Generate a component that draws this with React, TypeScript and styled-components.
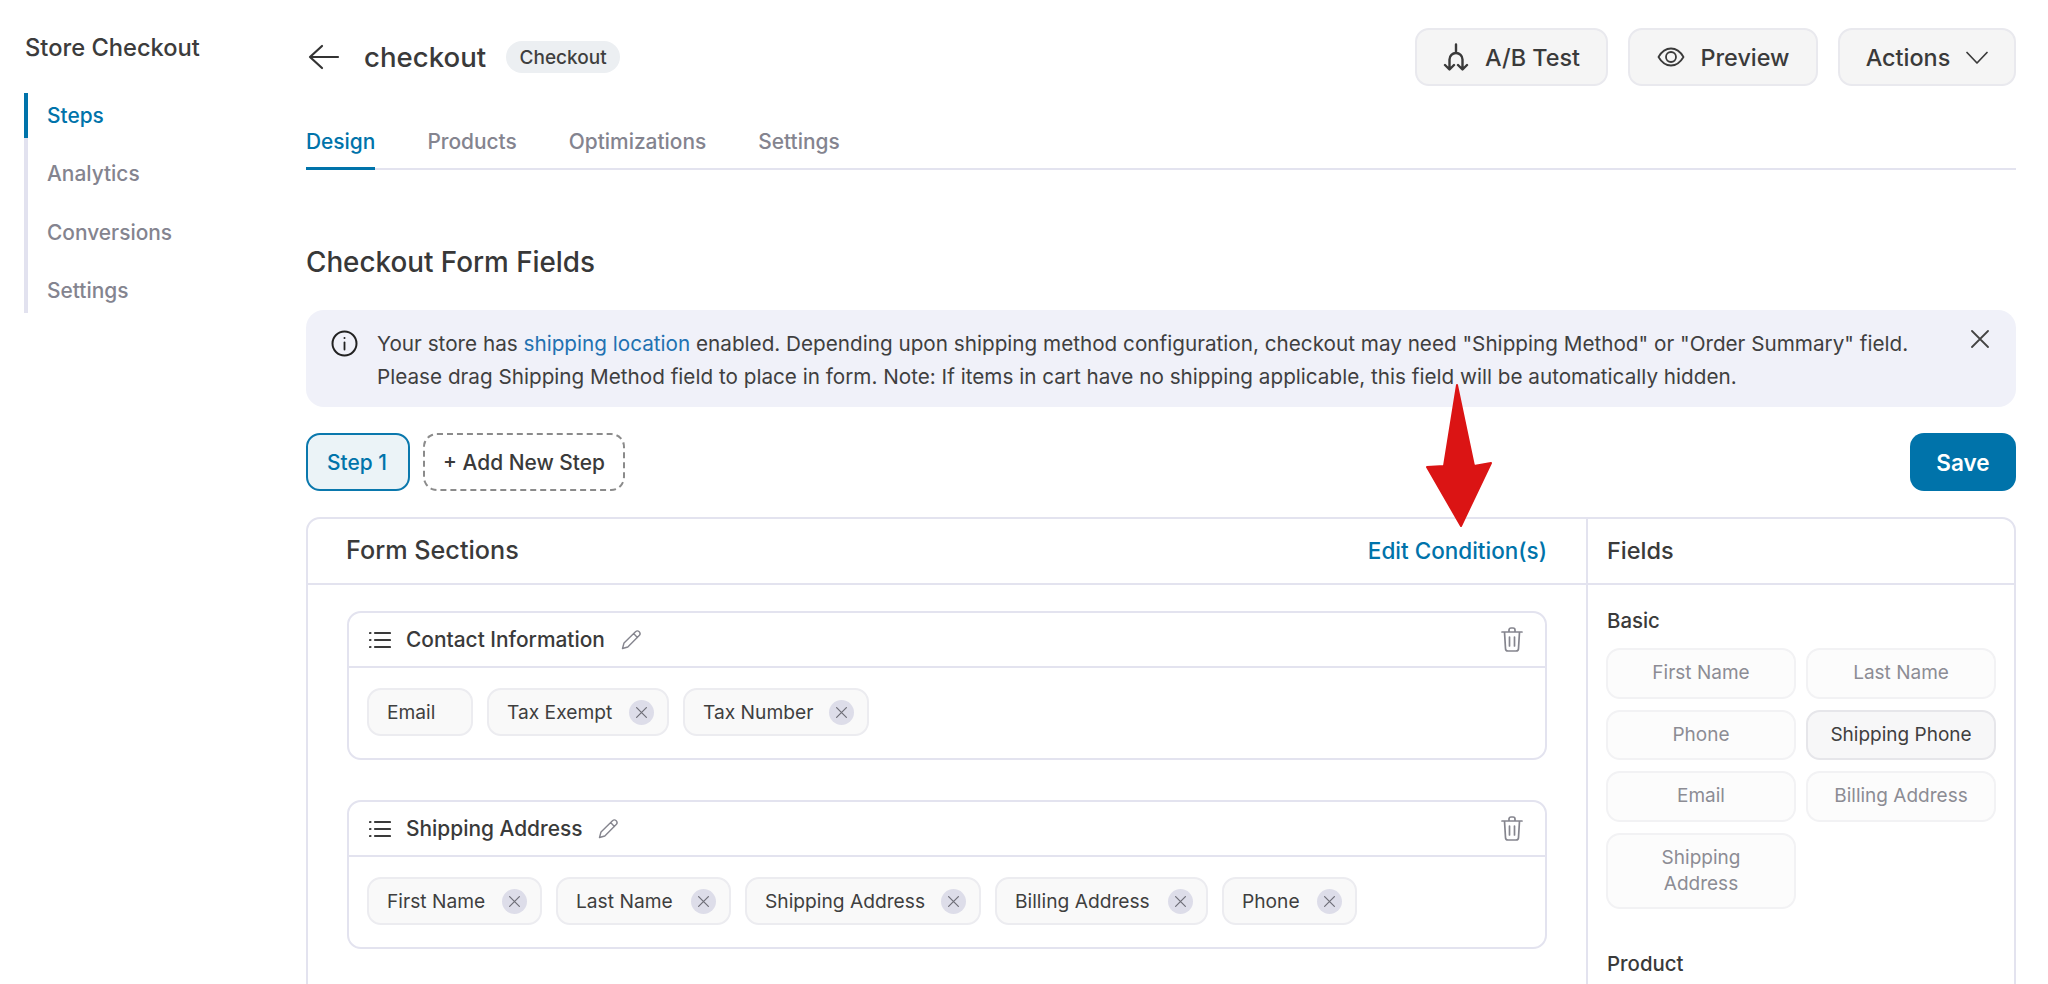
import React from "react";
import styled, { createGlobalStyle } from "styled-components";

const Global = createGlobalStyle`
  html, body { margin: 0; padding: 0; height: 984px; overflow: hidden; background: #fff; }
  body { font-family: Inter, "Liberation Sans", sans-serif; color: #3a3a3a; }
  * { box-sizing: border-box; }
`;

const Page = styled.div`
  position: relative;
  display: flex;
  width: 2048px;
  height: 984px;
  overflow: hidden;
`;

const Sidebar = styled.aside`
  width: 306px;
  flex: none;
  padding: 33px 0 0 25px;
`;

const SideTitle = styled.div`
  font-size: 23.7px;
  font-weight: 500;
  line-height: 30px;
  color: #3c3c3c;
  margin-bottom: 30px;
`;

const SideNav = styled.nav`
  display: flex;
  flex-direction: column;
  gap: 13.3px;
  width: 230px;
  margin-left: -1px;
  border-left: 4px solid #e2e2ef;
`;

const SideItem = styled.div<{ $active?: boolean }>`
  height: 45px;
  margin-left: -4px;
  padding-left: 19px;
  display: flex;
  align-items: center;
  font-size: 20.9px;
  font-weight: 500;
  border-left: 4px solid ${(p) => (p.$active ? "#0073aa" : "transparent")};
  color: ${(p) => (p.$active ? "#0073aa" : "#84848f")};
`;

const Main = styled.main`
  flex: 1;
  padding: 28px 32px 0 0;
  min-width: 0;
`;

const TopBar = styled.div`
  display: flex;
  align-items: center;
  height: 58px;
`;

const BackButton = styled.span`
  display: flex;
  margin: 0 24px 0 2px;
  color: #333;
`;

const PageName = styled.h1`
  margin: 0;
  font-size: 27.6px;
  font-weight: 500;
  color: #3a3a3a;
`;

const Badge = styled.span`
  margin-left: 20px;
  height: 32px;
  width: 114px;
  border-radius: 16px;
  background: #eceff2;
  display: flex;
  align-items: center;
  justify-content: center;
  font-size: 19px;
  font-weight: 500;
  color: #3f3f3f;
`;

const TopActions = styled.div`
  margin-left: auto;
  display: flex;
  gap: 20px;
`;

const TopButton = styled.div<{ $w: number }>`
  width: ${(p) => p.$w}px;
  height: 58px;
  display: flex;
  align-items: center;
  justify-content: center;
  gap: 16px;
  background: #f5f5f5;
  border: 2px solid #e9e9ee;
  border-radius: 14px;
  font-size: 23.4px;
  font-weight: 500;
  color: #3a3a3a;
`;

const Tabs = styled.div`
  display: flex;
  gap: 52px;
  margin-top: 39px;
  height: 45px;
  border-bottom: 2px solid #e3e3ef;
`;

const Tab = styled.div<{ $active?: boolean }>`
  height: 45px;
  padding-top: 2px;
  line-height: 30px;
  font-size: 20.9px;
  font-weight: 500;
  color: ${(p) => (p.$active ? "#0073aa" : "#84848f")};
  border-bottom: 3px solid ${(p) => (p.$active ? "#0073aa" : "transparent")};
`;

const Heading = styled.h2`
  margin: 74px 0 0;
  font-size: 27.8px;
  line-height: 36px;
  font-weight: 500;
  color: #383838;
`;

const Alert = styled.div`
  position: relative;
  margin-top: 30px;
  height: 97px;
  padding: 17px 0 0 25px;
  display: flex;
  gap: 19px;
  background: #f0f1f9;
  border-radius: 18px;
  font-size: 20.7px;
  line-height: 33px;
  color: #3f3f3f;
`;

const AlertIcon = styled.span`
  flex: none;
  display: flex;
  height: 33px;
  align-items: center;
  color: #222;
`;

const AlertLink = styled.span`
  color: #2271b1;
`;

const AlertClose = styled.span`
  position: absolute;
  top: 20px;
  right: 27px;
  display: flex;
  color: #444;
`;

const StepRow = styled.div`
  display: flex;
  gap: 13px;
  margin-top: 26px;
`;

const StepButton = styled.div`
  width: 104px;
  height: 58px;
  padding-right: 2px;
  display: flex;
  align-items: center;
  justify-content: center;
  background: #ebf3f7;
  border: 2px solid #0a78ad;
  border-radius: 14px;
  color: #0073aa;
  font-size: 20.9px;
  font-weight: 500;
`;

const AddStep = styled.div`
  width: 202px;
  height: 58px;
  display: flex;
  align-items: center;
  justify-content: center;
  border: 2px dashed #8b8b8b;
  border-radius: 14px;
  color: #3a3a3a;
  font-size: 20.9px;
  font-weight: 500;
`;

const SaveButton = styled.div`
  margin-left: auto;
  width: 106px;
  height: 58px;
  display: flex;
  align-items: center;
  justify-content: center;
  background: #0073aa;
  border-radius: 14px;
  color: #fff;
  font-size: 22.5px;
  font-weight: 600;
`;

const Board = styled.div`
  margin-top: 26px;
  display: grid;
  grid-template-columns: 1280px 1fr;
  height: 600px;
  border: 2px solid #e3e3ef;
  border-radius: 14px;
`;

const BoardLeft = styled.div`
  border-right: 2px solid #e3e3ef;
`;

const BoardHead = styled.div<{ $pad: number }>`
  height: 66px;
  padding: 0 39px 2px ${(p) => p.$pad}px;
  display: flex;
  align-items: center;
  justify-content: space-between;
  border-bottom: 2px solid #e3e3ef;
`;

const BoardTitle = styled.div<{ $small?: boolean }>`
  font-size: ${(p) => (p.$small ? 23.5 : 25.2)}px;
  font-weight: 500;
  color: #3a3a3a;
`;

const EditLink = styled.div`
  font-size: 22.5px;
  font-weight: 500;
  color: #0073aa;
`;

const SectionList = styled.div`
  padding: 26px 39px 0 39px;
  display: flex;
  flex-direction: column;
  gap: 40px;
`;

const SectionCard = styled.div`
  height: 149px;
  border: 2px solid #e3e3ef;
  border-radius: 14px;
`;

const SectionHead = styled.div`
  height: 55px;
  padding: 0 22px 0 20px;
  display: flex;
  align-items: center;
  border-bottom: 2px solid #e3e3ef;
`;

const SectionName = styled.div`
  margin-left: 15px;
  font-size: 20.9px;
  font-weight: 500;
  color: #3a3a3a;
`;

const PencilBox = styled.span`
  display: flex;
  margin-left: 16px;
  color: #85858e;
`;

const TrashBox = styled.span`
  display: flex;
  margin-left: auto;
  color: #85858e;
`;

const ChipRow = styled.div`
  padding: 20px 18px 0;
  display: flex;
  gap: 14px;
`;

const Chip = styled.div<{ $w: number }>`
  width: ${(p) => p.$w}px;
  height: 48px;
  padding: 0 13px 0 18px;
  display: flex;
  align-items: center;
  justify-content: space-between;
  background: #f9f9f9;
  border: 2px solid #ececf0;
  border-radius: 14px;
  font-size: 19.2px;
  color: #3f3f3f;
`;

const ChipRemove = styled.span`
  width: 25px;
  height: 25px;
  border-radius: 50%;
  background: #dddde9;
  display: flex;
  align-items: center;
  justify-content: center;
  color: #6f6f78;
`;

const FieldsPane = styled.div`
  padding: 23px 18px 0 19px;
`;

const GroupTitle = styled.div`
  font-size: 20.4px;
  font-weight: 500;
  line-height: 26px;
  color: #3a3a3a;
`;

const FieldGrid = styled.div`
  display: grid;
  grid-template-columns: 190px 190px;
  gap: 11px 10px;
  margin: 14px 0 0 -1px;
`;

const FieldBtn = styled.div<{ $on?: boolean; $tall?: boolean }>`
  height: ${(p) => (p.$tall ? 76 : 50.5)}px;
  padding: 0 16px;
  display: flex;
  align-items: center;
  justify-content: center;
  text-align: center;
  line-height: 26px;
  background: ${(p) => (p.$on ? "#f7f7f8" : "#fcfcfc")};
  border: 2px solid ${(p) => (p.$on ? "#e6e6ea" : "#f2f2f4")};
  border-radius: 14px;
  font-size: 19px;
  color: ${(p) => (p.$on ? "#3f3f3f" : "#8c8c94")};
`;

const ProductTitle = styled(GroupTitle)`
  margin-top: 42.5px;
`;

const ArrowOverlay = styled.svg`
  position: absolute;
  left: 1420px;
  top: 380px;
`;

const Svg = (p: React.SVGProps<SVGSVGElement>) => (
  <svg fill="none" stroke="currentColor" strokeLinecap="round" strokeLinejoin="round" {...p} />
);

const BackIcon = () => (
  <Svg width="32" height="26" viewBox="0 0 32 26" strokeWidth="2.2">
    <path d="M2 13h28M14 2 2 13l12 11" />
  </Svg>
);

const ABIcon = () => (
  <Svg width="26" height="28" viewBox="0 0 26 28" strokeWidth="2.4">
    <path d="M13 1.5V10M6.5 26v-9.5a6.5 6.5 0 0 1 13 0V26M2 22l4.5 4.5L11 22M15 22l4.5 4.5L24 22" />
  </Svg>
);

const EyeIcon = () => (
  <Svg width="28" height="20" viewBox="0 0 28 20" strokeWidth="1.8">
    <path d="M1.5 10C5 4 9 1.5 14 1.5S23 4 26.5 10C23 16 19 18.5 14 18.5S5 16 1.5 10Z" />
    <circle cx="14" cy="10" r="5" />
  </Svg>
);

const ChevronIcon = () => (
  <Svg width="22" height="13" viewBox="0 0 22 13" strokeWidth="1.7">
    <path d="M1 1.5 11 12 21 1.5" />
  </Svg>
);

const InfoIcon = () => (
  <Svg width="27" height="27" viewBox="0 0 27 27" strokeWidth="2">
    <circle cx="13.5" cy="13.5" r="12" />
    <path d="M13.5 12.5v7" strokeWidth="1.8" />
    <circle cx="13.5" cy="8" r="1" fill="currentColor" stroke="none" />
  </Svg>
);

const CloseIcon = ({ size = 18, w = 1.8 }: { size?: number; w?: number }) => (
  <Svg width={size} height={size} viewBox="0 0 18 18" strokeWidth={w}>
    <path d="M1 1l16 16M17 1 1 17" />
  </Svg>
);

const ListIcon = () => (
  <Svg width="22" height="18" viewBox="0 0 22 18" strokeWidth="2.2">
    <path d="M6 2h15M6 9h15M6 16h15M1 2h.5M1 9h.5M1 16h.5" />
  </Svg>
);

const PencilIcon = () => (
  <Svg width="21" height="21" viewBox="0 0 21 21" strokeWidth="1.4">
    <path d="M1.5 19.5 3 14 14.5 2.8a2.6 2.6 0 0 1 3.7 3.7L6.8 18 1.5 19.5ZM12.6 4.6l3.8 3.8" />
  </Svg>
);

const TrashIcon = () => (
  <Svg width="22" height="25" viewBox="0 0 22 25" strokeWidth="1.7">
    <path d="M1 5h20M3.5 5l1 16.5a2.5 2.5 0 0 0 2.5 2.5h8a2.5 2.5 0 0 0 2.5-2.5l1-16.5M8 5V3a2 2 0 0 1 2-2h2a2 2 0 0 1 2 2v2M8.5 10v9M13.5 10v9" />
  </Svg>
);

const ChipItem = ({ label, w, removable = true }: { label: string; w: number; removable?: boolean }) => (
  <Chip $w={w}>
    <span>{label}</span>
    {removable && (
      <ChipRemove>
        <CloseIcon size={11} w={2} />
      </ChipRemove>
    )}
  </Chip>
);

const Section = ({ title, children }: { title: string; children: React.ReactNode }) => (
  <SectionCard>
    <SectionHead>
      <ListIcon />
      <SectionName>{title}</SectionName>
      <PencilBox>
        <PencilIcon />
      </PencilBox>
      <TrashBox>
        <TrashIcon />
      </TrashBox>
    </SectionHead>
    <ChipRow>{children}</ChipRow>
  </SectionCard>
);

export default function App() {
  return (
    <Page>
      <Global />
      <Sidebar>
        <SideTitle>Store Checkout</SideTitle>
        <SideNav>
          <SideItem $active>Steps</SideItem>
          <SideItem>Analytics</SideItem>
          <SideItem>Conversions</SideItem>
          <SideItem>Settings</SideItem>
        </SideNav>
      </Sidebar>
      <Main>
        <TopBar>
          <BackButton>
            <BackIcon />
          </BackButton>
          <PageName>checkout</PageName>
          <Badge>Checkout</Badge>
          <TopActions>
            <TopButton $w={193}>
              <ABIcon />
              A/B Test
            </TopButton>
            <TopButton $w={190}>
              <EyeIcon />
              Preview
            </TopButton>
            <TopButton $w={178}>
              Actions
              <ChevronIcon />
            </TopButton>
          </TopActions>
        </TopBar>
        <Tabs>
          <Tab $active>Design</Tab>
          <Tab>Products</Tab>
          <Tab>Optimizations</Tab>
          <Tab>Settings</Tab>
        </Tabs>
        <Heading>Checkout Form Fields</Heading>
        <Alert>
          <AlertIcon>
            <InfoIcon />
          </AlertIcon>
          <div>
            Your store has <AlertLink>shipping location</AlertLink> enabled. Depending upon shipping method
            configuration, checkout may need "Shipping Method" or "Order Summary" field.
            <br />
            Please drag Shipping Method field to place in form. Note: If items in cart have no shipping applicable,
            this field will be automatically hidden.
          </div>
          <AlertClose>
            <CloseIcon />
          </AlertClose>
        </Alert>
        <StepRow>
          <StepButton>Step 1</StepButton>
          <AddStep>+ Add New Step</AddStep>
          <SaveButton>Save</SaveButton>
        </StepRow>
        <Board>
          <BoardLeft>
            <BoardHead $pad={38}>
              <BoardTitle>Form Sections</BoardTitle>
              <EditLink>Edit Condition(s)</EditLink>
            </BoardHead>
            <SectionList>
              <Section title="Contact Information">
                <ChipItem label="Email" w={106} removable={false} />
                <ChipItem label="Tax Exempt" w={182} />
                <ChipItem label="Tax Number" w={186} />
              </Section>
              <Section title="Shipping Address">
                <ChipItem label="First Name" w={175} />
                <ChipItem label="Last Name" w={175} />
                <ChipItem label="Shipping Address" w={236} />
                <ChipItem label="Billing Address" w={213} />
                <ChipItem label="Phone" w={135} />
              </Section>
            </SectionList>
          </BoardLeft>
          <div>
            <BoardHead $pad={19}>
              <BoardTitle $small>Fields</BoardTitle>
            </BoardHead>
            <FieldsPane>
              <GroupTitle>Basic</GroupTitle>
              <FieldGrid>
                <FieldBtn>First Name</FieldBtn>
                <FieldBtn>Last Name</FieldBtn>
                <FieldBtn>Phone</FieldBtn>
                <FieldBtn $on>Shipping Phone</FieldBtn>
                <FieldBtn>Email</FieldBtn>
                <FieldBtn>Billing Address</FieldBtn>
                <FieldBtn $tall>Shipping Address</FieldBtn>
              </FieldGrid>
              <ProductTitle>Product</ProductTitle>
            </FieldsPane>
          </div>
        </Board>
      </Main>
      <ArrowOverlay width="80" height="155" viewBox="0 0 80 155">
        <path
          d="M37 5 54 86 71 83 41 146 7 87 24 86Z"
          fill="#db1414"
          stroke="#db1414"
          strokeWidth="2"
          strokeLinejoin="round"
        />
      </ArrowOverlay>
    </Page>
  );
}
